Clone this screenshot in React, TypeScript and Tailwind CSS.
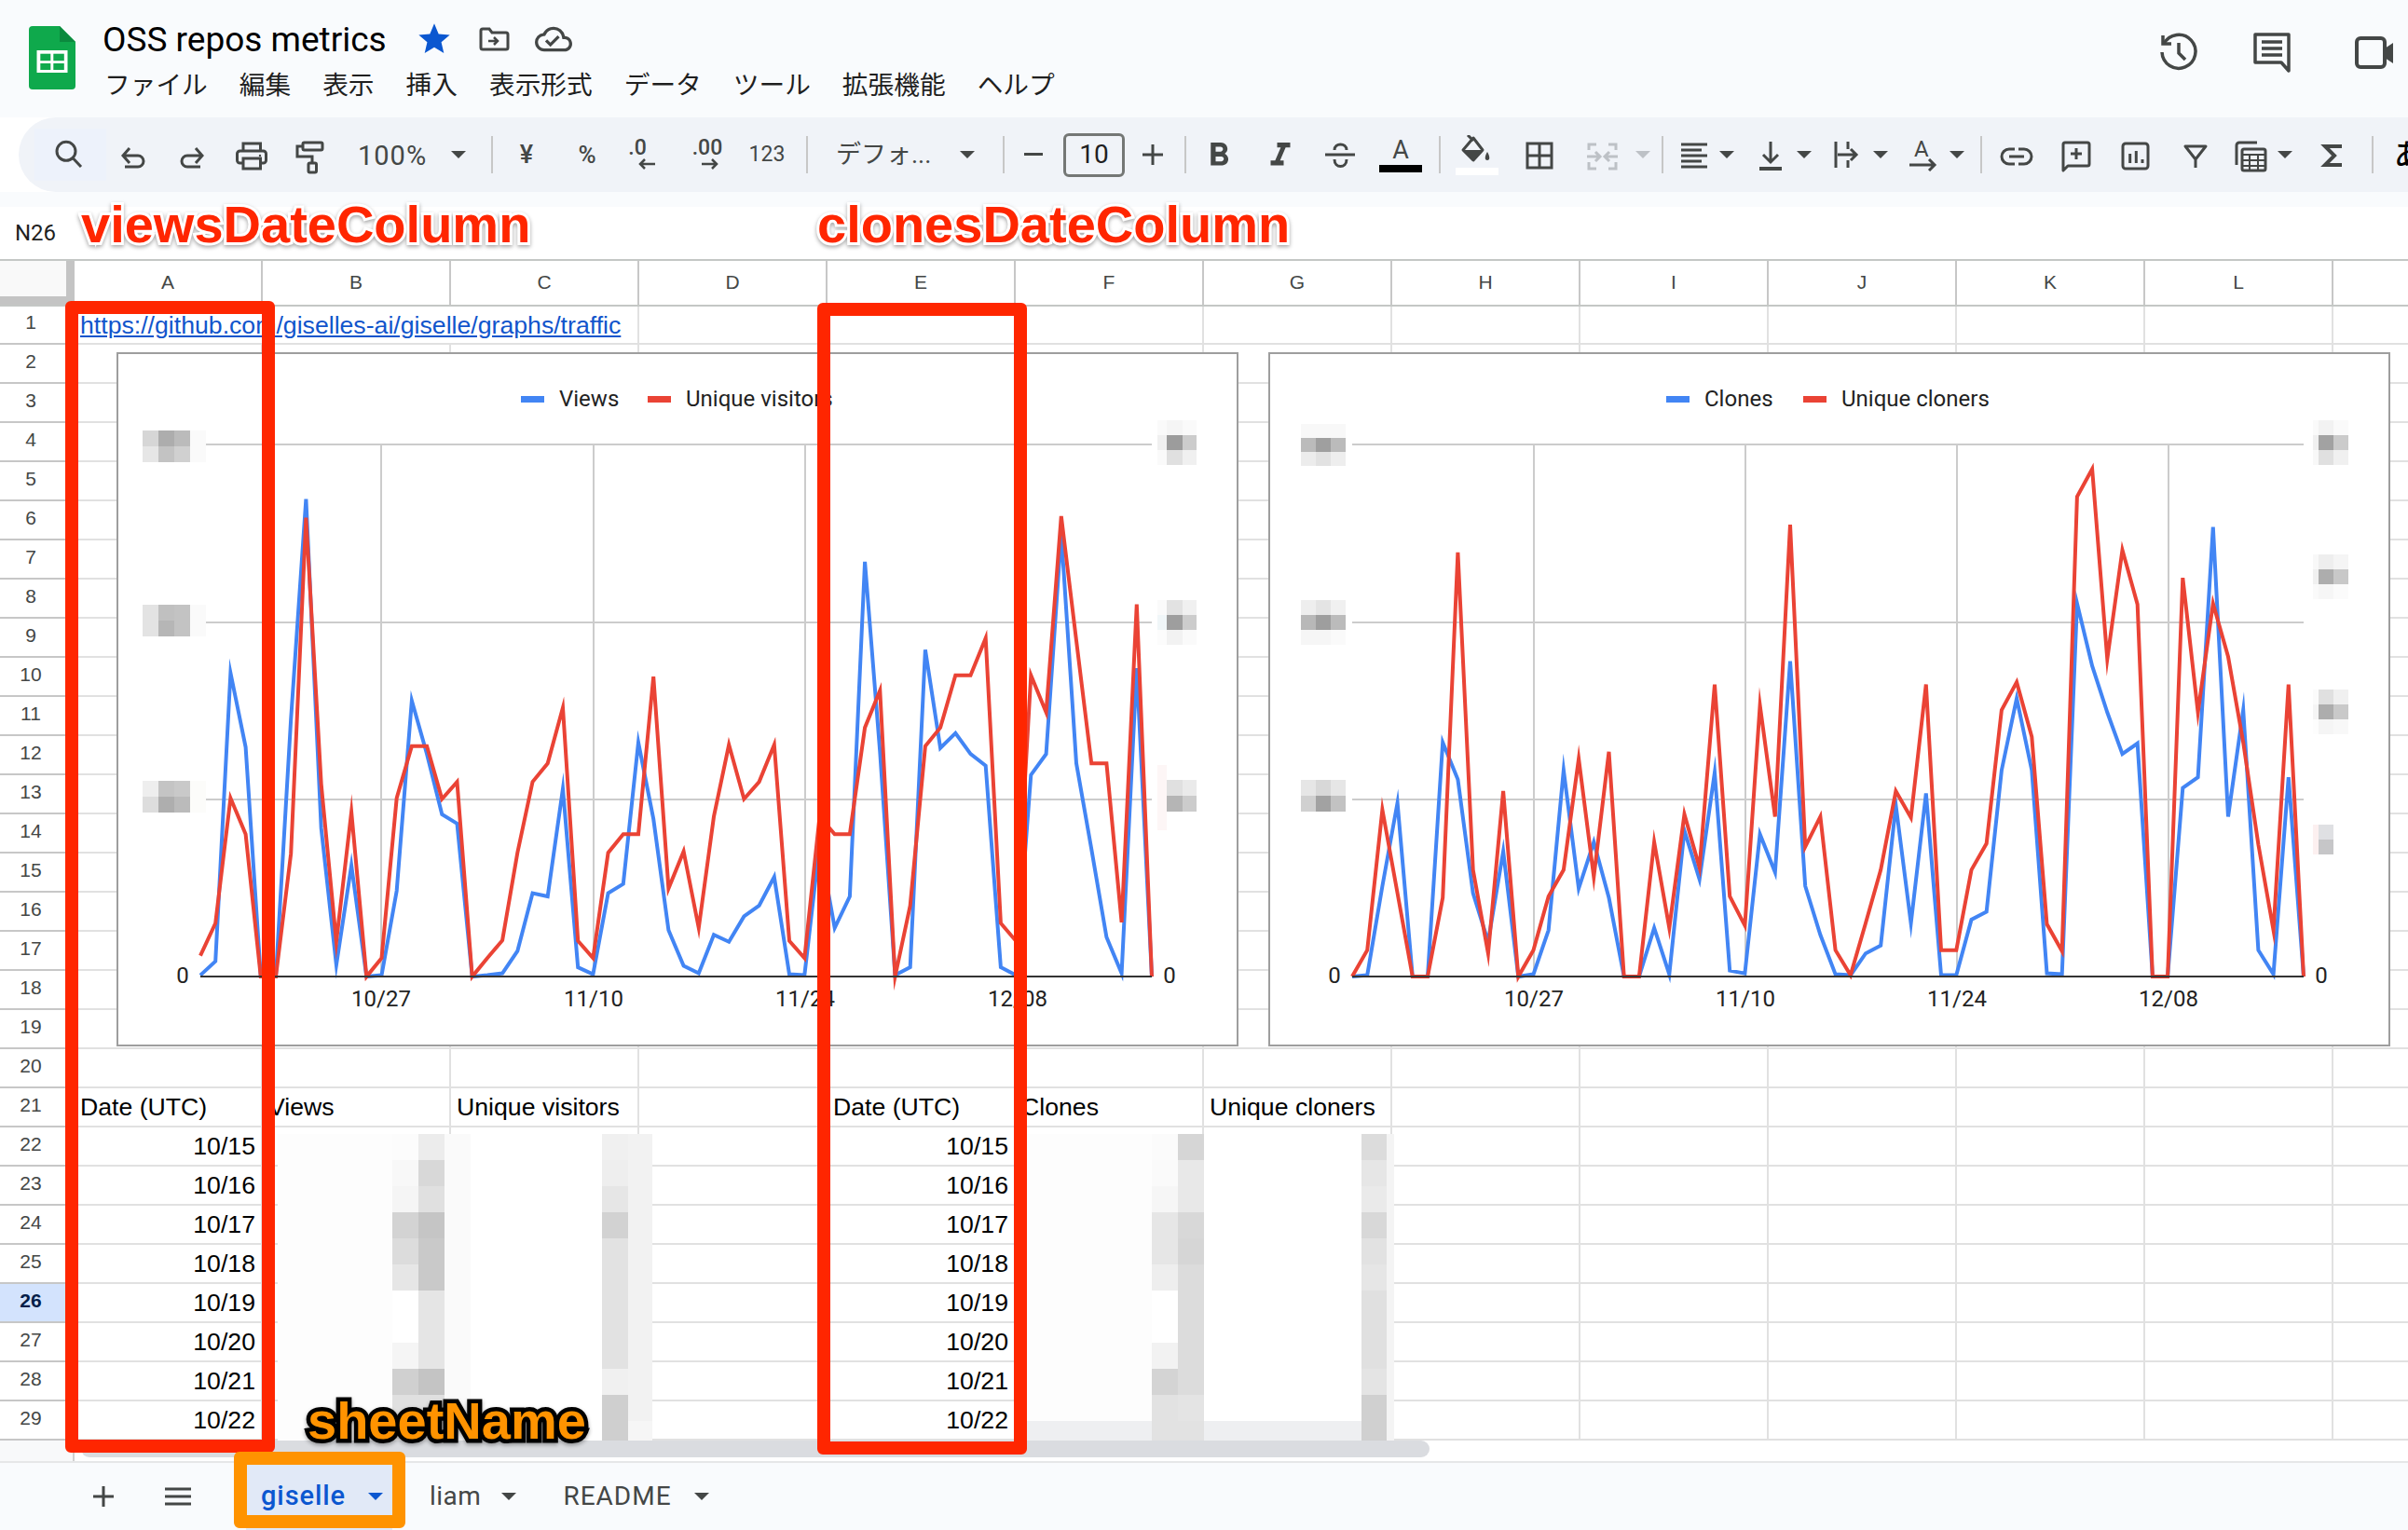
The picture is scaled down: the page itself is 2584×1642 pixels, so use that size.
import React from "react";
import { MdFormatBold, MdFormatItalic, MdOutlineCloudDone, MdStar } from "react-icons/md";

const ICON = "#444746";
const COLS = "ABCDEFGHIJKLM".split("");

const Icon = ({ children }: { children: React.ReactNode }) => (
  <svg width="48" height="48" viewBox="0 0 48 48" fill="none" stroke={ICON} strokeWidth="3">
    {children}
  </svg>
);

const Tb = ({ className, children }: { className: string; children: React.ReactNode }) => (
  <div className={`flex h-[48px] flex-none items-center justify-center ${className}`}>{children}</div>
);

const Drop = ({ className = "", color = ICON }: { className?: string; color?: string }) => (
  <svg className={`flex-none ${className}`} width="16" height="8" viewBox="0 0 16 8" fill={color}>
    <path d="M0 0H16L8 8Z" />
  </svg>
);

const Divider = () => <div className="h-[40px] w-[2px] flex-none bg-[#c7c7c7]" />;

const blue1 = [1382, 1352, 730, 890, 1385, 1385, 830, 355, 1065, 1360, 1145, 1385, 1382, 1200, 790, 905, 1035, 1055, 1385, 1382, 1378, 1330, 1205, 1212, 980, 1365, 1380, 1205, 1185, 880, 1045, 1285, 1362, 1378, 1295, 1310, 1255, 1232, 1170, 1380, 1382, 1100, 1280, 1212, 490, 900, 1382, 1365, 680, 892, 860, 905, 930, 1365, 1382, 950, 905, 430, 925, 1110, 1300, 1378, 720, 1385];
const red1 = [1340, 1270, 1000, 1078, 1385, 1385, 1120, 395, 970, 1310, 1030, 1385, 1345, 1000, 888, 888, 1002, 965, 1385, 1345, 1307, 1118, 965, 925, 805, 1308, 1345, 1118, 1078, 1078, 738, 1195, 1115, 1280, 1040, 885, 1002, 965, 885, 1308, 1345, 1040, 1078, 1078, 848, 768, 1385, 1232, 888, 848, 735, 735, 655, 1270, 1308, 735, 815, 392, 660, 925, 925, 1268, 582, 1385];
const blue2 = [1385, 1382, 1190, 1010, 1385, 1385, 880, 960, 1205, 1310, 1115, 1385, 1380, 1285, 940, 1195, 1095, 1215, 1385, 1385, 1280, 1380, 1070, 1175, 945, 1372, 1378, 1078, 1160, 705, 1190, 1295, 1380, 1382, 1335, 1318, 1015, 1270, 990, 1382, 1382, 1262, 1245, 940, 785, 940, 1378, 1380, 580, 715, 815, 905, 882, 1385, 1385, 978, 955, 415, 1040, 810, 1328, 1380, 955, 1385];
const red2 = [1385, 1328, 1025, 1205, 1385, 1385, 1215, 470, 1155, 1335, 985, 1385, 1328, 1212, 1155, 915, 1170, 900, 1385, 1385, 1095, 1280, 1035, 1150, 755, 1212, 1275, 800, 1040, 410, 1105, 1040, 1328, 1382, 1270, 1155, 985, 1042, 755, 1328, 1328, 1155, 1098, 810, 750, 868, 1272, 1330, 350, 290, 700, 465, 582, 1385, 1385, 525, 815, 580, 695, 880, 1100, 1285, 755, 1385];

// pixelated redactions: [x, y, w, h, colour]
type Tile = [number, number, number, number, string];
const tiles = (x: number, y: number, widths: number[], h: number, rows: string[][]): Tile[] =>
  rows.flatMap((row, r) => {
    let cx = x;
    return row.map((c, i) => {
      const t: Tile = [cx, y + r * h, widths[i], h, c];
      cx += widths[i];
      return t;
    });
  });

const mosaic1: Tile[] = [
  ...tiles(153, 462, [17, 17, 17, 17], 17, [["#d6d6d6", "#adadad", "#bbbbbb", "#fafafa"], ["#e6e6e6", "#c3c3c3", "#d0d0d0", "#fafafa"]]),
  ...tiles(153, 649, [17, 17, 17, 17], 17, [["#e3e3e3", "#c0c0c0", "#c3c3c3", "#fafafa"], ["#e3e3e3", "#b6b6b6", "#c3c3c3", "#fafafa"]]),
  ...tiles(153, 838, [17, 17, 17, 17], 17, [["#eeeeee", "#c4c4c4", "#c9c9c9", "#fcfcfa"], ["#dddddd", "#aeaeae", "#bbbbbb", "#fcfcfa"]]),
  ...tiles(1242, 451, [10, 17, 15], 16, [["#fafafa", "#f5f5f5", "#fafafa"], ["#f0f0f0", "#9c9c9c", "#cccccc"], ["#fafafa", "#e0e0e0", "#f0f0f0"]]),
  ...tiles(1242, 644, [10, 17, 15], 16, [["#fafafa", "#e2e2e2", "#f0f0f0"], ["#f0f6f8", "#9e9e9e", "#cccccc"], ["#fcfcfc", "#f2f2f2", "#fafafa"]]),
  ...tiles(1242, 821, [10], 70, [["#fdf6f6"]]),
  ...tiles(1252, 837, [17, 15], 17, [["#e0e0e0", "#eaeaea"], ["#b5b5b5", "#cccccc"]]),
];

const mosaic2: Tile[] = [
  ...tiles(1396, 455, [16, 16, 16], 15, [["#f8f8f8", "#f8f8f8", "#f8f8f8"], ["#bbbbbb", "#9f9f9f", "#bbbbbb"], ["#ececec", "#e2e2e2", "#eeeeee"]]),
  ...tiles(1396, 644, [16, 16, 16], 16, [["#eeeeee", "#e4e4e4", "#f0f0f0"], ["#b8b8b8", "#9e9e9e", "#bbbbbb"], ["#f6f6f6", "#f6f6f6", "#fafafa"]]),
  ...tiles(1396, 837, [16, 16, 16], 17, [["#e6e6e6", "#d8d8d8", "#e6e6e6"], ["#d0d0d0", "#a2a2a2", "#c2c2c2"]]),
  ...tiles(2482, 451, [6, 16, 16], 16, [["#fafafa", "#f2f2f2", "#fafafa"], ["#f0f0f0", "#a2a2a2", "#cbcbcb"], ["#f8f8f8", "#e0e0e0", "#f0f0f0"]]),
  ...tiles(2482, 595, [6, 16, 16], 16, [["#f8f8f8", "#eeeeee", "#f5f5f5"], ["#f0f0f0", "#adadad", "#c8c8c8"], ["#fafafa", "#f6f6f6", "#fbfbfb"]]),
  ...tiles(2482, 740, [6, 16, 16], 16, [["#fbfbfb", "#e0e0e0", "#f0f0f0"], ["#f5f5f5", "#adadad", "#c9c9c9"], ["#fdfdfd", "#f5f5f5", "#f8f8f8"]]),
  ...tiles(2482, 885, [6, 16], 16, [["#fcf0f0", "#dfe0e3"], ["#fcf0f0", "#c6c6c8"]]),
];

type ChartProps = {
  className: string;
  x: number;
  w: number;
  plotLeft: number;
  plotRight: number;
  blue: number[];
  red: number[];
  ticks: [number, string][];
  legendA: [number, string];
  legendB: [number, string];
  mosaic: Tile[];
  zeros: [number, number];
};

// the values are read off the reference, 2.01 units to a pixel from y=360
const toY = (v: number) => 359 + v / 2.01;

const TrafficChart = ({ className, x, w, plotLeft, plotRight, blue, red, ticks, legendA, legendB, mosaic, zeros }: ChartProps) => {
  const step = (plotRight - plotLeft) / 63;
  const points = (vals: number[]) => vals.map((v, i) => `${(plotLeft + i * step).toFixed(1)},${toY(v).toFixed(1)}`).join(" ");
  return (
    <div className={`absolute top-[378px] h-[745px] border-2 border-[#9e9e9e] bg-white ${className}`}>
      <svg className="block" width={w - 4} height={741} viewBox={`${x + 2} 380 ${w - 4} 741`} fontSize="24" fill="#222222">
        {[477, 668, 858].map((y) => (
          <line key={y} x1={plotLeft} x2={plotRight} y1={y} y2={y} stroke="#cccccc" strokeWidth="2" />
        ))}
        {ticks.map(([tx]) => (
          <line key={tx} x1={tx} x2={tx} y1={477} y2={1048} stroke="#cccccc" strokeWidth="2" />
        ))}
        <polyline points={points(blue)} fill="none" stroke="#4285f4" strokeWidth="4" strokeMiterlimit="10" />
        <polyline points={points(red)} fill="none" stroke="#ea4335" strokeWidth="4" strokeMiterlimit="10" />
        <line x1={plotLeft} x2={plotRight} y1={1048} y2={1048} stroke="#333333" strokeWidth="2" />
        <rect x={legendA[0]} y={425} width="25" height="7" fill="#4285f4" />
        <text x={legendA[0] + 41} y={436}>{legendA[1]}</text>
        <rect x={legendB[0]} y={425} width="25" height="7" fill="#ea4335" />
        <text x={legendB[0] + 41} y={436}>{legendB[1]}</text>
        {ticks.map(([tx, label]) => (
          <text key={label} x={tx} y={1080} textAnchor="middle">{label}</text>
        ))}
        <text x={zeros[0]} y={1055} textAnchor="middle">0</text>
        <text x={zeros[1]} y={1055} textAnchor="middle">0</text>
        {mosaic.map(([mx, my, mw, mh, c], i) => (
          <rect key={i} x={mx} y={my} width={mw} height={mh} fill={c} />
        ))}
      </svg>
    </div>
  );
};

const viewCols: { w: number; cells: string[] }[] = [
  { w: 123, cells: Array(12).fill("#fdfdfd") },
  { w: 28, cells: ["#fcfcfc", "#f8f8f8", "#f5f5f5", "#d3d3d3", "#dcdcdc", "#e6e6e6", "#ffffff", "#ffffff", "#f5f5f5", "#d0d0d0", "#e0e0e0", "#ececec"] },
  { w: 28, cells: ["#ececec", "#d8d8d8", "#e0e0e0", "#c5c5c5", "#c9c9c9", "#c9c9c9", "#e5e5e5", "#e5e5e5", "#e5e5e5", "#c4c4c4", "#e0e0e0", "#e6e6e6"] },
  { w: 28, cells: Array(12).fill("#fafafa") },
  { w: 141, cells: Array(12).fill("#ffffff") },
  { w: 28, cells: ["#f0f0f0", "#eeeeee", "#e6e6e6", "#d2d2d2", "#e2e2e2", "#e2e2e2", "#e2e2e2", "#e2e2e2", "#e2e2e2", "#f0f0f0", "#cfcfcf", "#cfcfcf"] },
  { w: 26, cells: [...Array(11).fill("#f2f2f2"), "#f6f6f6"] },
];

const cloneCols: { w: number; cells: string[] }[] = [
  { w: 134, cells: [...Array(11).fill("#fdfdfd"), "#eeeff1"] },
  { w: 28, cells: ["#fbfbfb", "#fafafa", "#f6f6f6", "#e6e6e6", "#e6e6e6", "#eeeeee", "#ffffff", "#ffffff", "#f2f2f2", "#d4d4d4", "#e2e2e2", "#e2e2e2"] },
  { w: 28, cells: ["#d6d6d6", "#e8e8e8", "#e8e8e8", "#d8d8d8", "#d6d6d6", "#dcdcdc", "#dcdcdc", "#dcdcdc", "#dcdcdc", "#dcdcdc", "#e4e4e4", "#e2e2e2"] },
  { w: 169, cells: [...Array(11).fill("#ffffff"), "#eeeff1"] },
  { w: 27, cells: ["#dcdcdc", "#e6e6e6", "#eaeaea", "#d8d8d8", "#e2e2e2", "#e6e6e6", "#e0e0e0", "#e0e0e0", "#e0e0e0", "#e4e4e4", "#d0d0d0", "#d0d0d0"] },
  { w: 8, cells: Array(12).fill("#f4f4f4") },
];

const Mosaic = ({ className, cols }: { className: string; cols: { w: number; cells: string[] }[] }) => (
  <div className={`absolute flex ${className}`}>
    {cols.map((col, i) => (
      <div key={i} style={{ width: col.w }}>
        {col.cells.map((c, j) => (
          <div key={j} className={j === 11 ? "h-[21px]" : "h-[28px]"} style={{ background: c }} />
        ))}
      </div>
    ))}
  </div>
);

const DATES = ["10/15", "10/16", "10/17", "10/18", "10/19", "10/20", "10/21", "10/22"];

const cellText = (row: number, col: number): React.ReactNode => {
  if (row === 1 && col === 0)
    return (
      <a className="whitespace-nowrap pl-[6px] text-[#1155cc] underline" href="#traffic">
        https://github.com/giselles-ai/giselle/graphs/traffic
      </a>
    );
  if (row === 21) {
    const heads: Record<number, string> = { 0: "Date (UTC)", 1: "Views", 2: "Unique visitors", 4: "Date (UTC)", 5: "Clones", 6: "Unique cloners" };
    if (heads[col]) return <span className="whitespace-nowrap pl-[6px]">{heads[col]}</span>;
  }
  if (row >= 22 && (col === 0 || col === 4))
    return <span className="ml-auto pr-[6px]">{DATES[row - 22]}</span>;
  return null;
};

const SheetGrid = () => (
  <div className="h-[1217px] overflow-hidden">
    <div className="grid w-[2706px] grid-cols-[80px_repeat(13,202px)] [font-family:'Liberation_Sans',Arial,sans-serif] text-[26.67px] text-black">
      {Array.from({ length: 29 }, (_, r) => r + 1).map((row) => (
        <React.Fragment key={row}>
          <div
            className={`flex items-center border-r-2 border-b-2 border-[#c7c7c7] pb-[5px] pl-[3px] text-[21px] ${row === 1 ? "h-[41px]" : "h-[42px]"} ${row === 26 ? "bg-[#d3e3fd] font-bold text-[#041e49]" : "text-[#444746]"}`}
          >
            <span className="w-[60px] text-center">{row}</span>
          </div>
          {COLS.map((_, c) => (
            <div
              key={c}
              className={`flex items-center border-b-2 border-[#e1e1e1] ${row === 1 ? "h-[41px]" : "h-[42px]"} ${row === 1 && c < 2 ? "" : "border-r-2"}`}
            >
              {cellText(row, c)}
            </div>
          ))}
        </React.Fragment>
      ))}
    </div>
  </div>
);

export default function App() {
  return (
    <div className="relative h-[1642px] w-[2584px] overflow-hidden bg-white [font-family:Roboto,'Noto_Sans_CJK_JP',sans-serif]">
      {/* title bar */}
      <header className="flex h-[126px] bg-[#f9fbfd] pt-[22px] pl-[31px]">
        <svg className="mt-[6px] flex-none" width="50" height="68" viewBox="0 0 50 68">
          <path d="M4 0H33L50 17V64a4 4 0 0 1-4 4H4a4 4 0 0 1-4-4V4a4 4 0 0 1 4-4Z" fill="#0fa94c" />
          <path d="M33 0L50 17H33Z" fill="#0b8a3e" />
          <rect x="8.5" y="26" width="33" height="24" fill="#ffffff" />
          <rect x="12.3" y="29.7" width="11" height="7.5" fill="#0fa94c" />
          <rect x="26.3" y="29.7" width="11.5" height="7.5" fill="#0fa94c" />
          <rect x="12.3" y="40" width="11" height="7" fill="#0fa94c" />
          <rect x="26.3" y="40" width="11.5" height="7" fill="#0fa94c" />
        </svg>
        <div className="ml-[29px]">
          <div className="flex h-[40px] items-center">
            <span className="w-[301px] whitespace-nowrap text-[37px] leading-none text-black">OSS repos metrics</span>
            <MdStar className="ml-[35px]" size={40} color="#0b57d0" />
            <svg className="ml-[28px]" width="33" height="26" viewBox="0 0 33 26" fill="none" stroke={ICON} strokeWidth="3">
              <path d="M2 4a2 2 0 0 1 2-2H11L14 6H29a2 2 0 0 1 2 2V22a2 2 0 0 1-2 2H4a2 2 0 0 1-2-2Z" />
              <path d="M10 15H20M16 11L20 15L16 19" strokeWidth="2.5" />
            </svg>
            <MdOutlineCloudDone className="ml-[27px]" size={40} color={ICON} />
          </div>
          <nav className="mt-[10px] ml-[2px] flex h-[40px] items-center gap-[34px] text-[27.7px] whitespace-nowrap text-[#1f1f1f]">
            {["ファイル", "編集", "表示", "挿入", "表示形式", "データ", "ツール", "拡張機能", "ヘルプ"].map((m) => (
              <span key={m}>{m}</span>
            ))}
          </nav>
        </div>
        <div className="mt-[10px] ml-auto flex h-[48px] flex-none items-center">
          <svg width="48" height="48" viewBox="0 0 48 48" fill="none" stroke={ICON} strokeWidth="3.5">
            <path d="M8 15A18 18 0 1 1 6 24" />
            <path d="M7 6V15H16M24 14V25L31 32" />
          </svg>
          <svg className="ml-[52px]" width="48" height="48" viewBox="0 0 48 48" fill="none" stroke={ICON} strokeWidth="3.5">
            <path d="M6 5H42V44L34 35H6Z" strokeLinejoin="round" />
            <path d="M13 13H35M13 20H35M13 27H35" />
          </svg>
          <svg className="ml-[65px]" width="41" height="48" viewBox="0 0 41 48" fill="none" stroke={ICON} strokeWidth="4">
            <rect x="2" y="9" width="30" height="31" rx="4" />
            <path d="M32 20L41 14V36L32 30Z" fill={ICON} stroke="none" />
          </svg>
          <div className="w-[16px]" />
        </div>
      </header>

      {/* toolbar */}
      <div className="ml-[20px] flex h-[80px] items-center overflow-hidden rounded-l-[40px] bg-[#f0f3f8] pl-[17px] text-[#444746]">
        <Tb className="h-[56px] w-[77px] bg-[#edf2fb]">
          <Icon>
            <circle cx="19" cy="20.3" r="10" />
            <path d="M26.5 28L35 37" />
          </Icon>
        </Tb>
        <Tb className="w-[58px]">
          <Icon>
            <path d="M20 17L13 25L20 33M13 25H29a6 6 0 0 1 0 12H15" />
          </Icon>
        </Tb>
        <Tb className="w-[68px]">
          <Icon>
            <path d="M28 17L35 25L28 33M35 25H19a6 6 0 0 0 0 12H33" />
          </Icon>
        </Tb>
        <Tb className="w-[59px]">
          <Icon>
            <rect x="8.5" y="20" width="31" height="13" rx="3" />
            <path d="M15 20V12H33.5V20" />
            <rect x="15" y="28" width="18.5" height="11" fill="#f0f3f8" />
            <circle cx="33" cy="25" r="1.2" fill={ICON} stroke="none" />
          </Icon>
        </Tb>
        <Tb className="w-[66px]">
          <Icon>
            <rect x="17" y="11" width="21" height="8" rx="1.5" />
            <path d="M17 15H11V26H27V33" />
            <rect x="23" y="33" width="8.5" height="10" rx="1.5" />
          </Icon>
        </Tb>
        <Tb className="w-[162px] !justify-start pl-[19px]">
          <span className="mt-[3px] w-[100px] text-[29px] tracking-[1px]">100%</span>
          <Drop />
        </Tb>
        <Divider />
        <Tb className="w-[72px] text-[27px] font-medium">¥</Tb>
        <Tb className="w-[58px] text-[26px] font-medium">%</Tb>
        <Tb className="w-[62px]">
          <div className="flex flex-col items-center text-[23px] leading-[20px] font-medium">
            <span className="-ml-[12px]">.0</span>
            <svg className="ml-[8px]" width="20" height="14" viewBox="0 0 20 14" fill="none" stroke={ICON} strokeWidth="2.5">
              <path d="M19 7H3M8 2L3 7L8 12" />
            </svg>
          </div>
        </Tb>
        <Tb className="w-[76px]">
          <div className="flex flex-col items-center text-[23px] leading-[20px] font-medium">
            .00
            <svg className="ml-[6px]" width="20" height="14" viewBox="0 0 20 14" fill="none" stroke={ICON} strokeWidth="2.5">
              <path d="M1 7H17M12 2L17 7L12 12" />
            </svg>
          </div>
        </Tb>
        <Tb className="w-[52px] text-[23px]">123</Tb>
        <div className="w-[16px] flex-none" />
        <Divider />
        <Tb className="w-[209px] !justify-start pl-[30px] text-[27px]">
          <span className="w-[133px] whitespace-nowrap">デフォ...</span>
          <Drop />
        </Tb>
        <Divider />
        <Tb className="w-[62px]">
          <svg width="20" height="4" viewBox="0 0 20 4" fill={ICON}><rect width="20" height="3" /></svg>
        </Tb>
        <div className="ml-[1px] flex h-[47px] w-[66px] flex-none items-center justify-center rounded-[6px] border-[3px] border-[#747775] text-[28px] text-[#1f1f1f]">10</div>
        <Tb className="w-[60px]">
          <svg width="22" height="22" viewBox="0 0 22 22" stroke={ICON} strokeWidth="3"><path d="M0 11H22M11 0V22" /></svg>
        </Tb>
        <div className="w-[4px] flex-none" />
        <Divider />
        <Tb className="w-[70px]"><MdFormatBold className="mt-[2px]" size={42} color={ICON} /></Tb>
        <Tb className="w-[62px]"><MdFormatItalic className="mt-[2px]" size={42} color={ICON} /></Tb>
        <Tb className="w-[65px]">
          <Icon>
            <path d="M8 24H40" />
            <path d="M18 19C18 11 31 11 31 19M18 29C18 39 31 39 31 29" />
          </Icon>
        </Tb>
        <Tb className="w-[66px]">
          <div className="mt-[2px] flex w-[46px] flex-col items-center">
            <span className="text-[27px] leading-[25px]">A</span>
            <div className="mt-[3px] h-[8px] w-[46px] bg-black" />
          </div>
        </Tb>
        <div className="w-[8px] flex-none" />
        <Divider />
        <Tb className="w-[78px]">
          <div className="flex w-[46px] flex-col items-center">
            <svg width="48" height="32" viewBox="0 0 48 32" fill="none" stroke={ICON} strokeWidth="3">
              <path d="M14 0L20 6" />
              <path d="M20 3L30 16L20 27L9 16Z" strokeLinejoin="round" />
              <path d="M9 16H31L20 27Z" fill={ICON} stroke="none" />
              <path d="M35 18C32 23 32 27 35 27C38 27 38 23 35 18Z" fill={ICON} stroke="none" />
            </svg>
            <div className="mt-[3px] h-[8px] w-[46px] bg-white" />
          </div>
        </Tb>
        <Tb className="w-[56px]">
          <Icon>
            <rect x="11" y="12" width="26" height="26" />
            <path d="M24 12V38M11 25H37" />
          </Icon>
        </Tb>
        <Tb className="w-[78px]">
          <svg width="48" height="48" viewBox="0 0 48 48" fill="none" stroke="#bdc1c6" strokeWidth="3">
            <path d="M18 13H10V19M10 32V39H18M31 13H39V19M39 32V39H31" />
            <path d="M8 26H21M17 21L22 26L17 31M41 26H28M32 21L27 26L32 31" />
          </svg>
        </Tb>
        <Drop className="-ml-[3px] mr-[-3px]" color="#bdc1c6" />
        <div className="w-[15px] flex-none" />
        <Divider />
        <Tb className="w-[66px]">
          <Icon>
            <path d="M10 13H38M10 19H32M10 25H38M10 31H32M10 37H38" />
          </Icon>
        </Tb>
        <Drop className="-ml-[6px]" />
        <Tb className="w-[77px]">
          <Icon>
            <path d="M24 10V32M16 24L24 32L32 24" />
            <path d="M12 39H36" strokeWidth="4" />
          </Icon>
        </Tb>
        <Drop className="-ml-[10px]" />
        <Tb className="w-[74px]">
          <Icon>
            <path d="M13 10V38M26 10V18M26 30V38M15 24H35M29 18L35 24L29 30" />
          </Icon>
        </Tb>
        <Drop className="-ml-[8px]" />
        <Tb className="w-[76px]">
          <div className="relative h-[36px] w-[30px]">
            <span className="absolute top-[0px] left-[5px] text-[24px] leading-[24px]">A</span>
            <svg className="absolute bottom-[0px] left-[0px]" width="30" height="14" viewBox="0 0 30 14" fill="none" stroke={ICON} strokeWidth="3">
              <path d="M0 7H27M21 1L27 7L21 13" />
            </svg>
          </div>
        </Tb>
        <Drop className="-ml-[10px]" />
        <div className="w-[17px] flex-none" />
        <Divider />
        <Tb className="w-[74px]">
          <Icon>
            <path d="M22 18H16a8 8 0 0 0 0 16H22M26 18H32a8 8 0 0 1 0 16H26M16 26H32" />
          </Icon>
        </Tb>
        <Tb className="w-[54px]">
          <Icon>
            <path d="M10 13a2 2 0 0 1 2-2H36a2 2 0 0 1 2 2V34a2 2 0 0 1-2 2H15L10 41Z" strokeLinejoin="round" />
            <path d="M24 17V29M18 23H30" />
          </Icon>
        </Tb>
        <Tb className="w-[74px]">
          <Icon>
            <rect x="10" y="12" width="27" height="27" rx="3" />
            <path d="M17.7 23V33M24.3 20V33M31 29V33" />
          </Icon>
        </Tb>
        <Tb className="w-[54px]">
          <Icon>
            <path d="M13 15H35L24 29ZM24 29V38" strokeLinejoin="round" />
          </Icon>
        </Tb>
        <Tb className="w-[65px]">
          <Icon>
            <path d="M30 11H11a3 3 0 0 0-3 3V35" />
            <rect x="14" y="18" width="25" height="23" rx="2" />
            <path d="M14 24H39M14 30H39M14 36H39M22 24V41M31 24V41" strokeWidth="2" />
          </Icon>
        </Tb>
        <Drop className="-ml-[4px]" />
        <Tb className="w-[85px]">
          <svg width="48" height="48" viewBox="0 0 48 48" fill="none" stroke={ICON} strokeWidth="4">
            <path d="M34 15H16L26 25L16 35H34" />
          </svg>
        </Tb>
        <Divider />
        <span className="ml-[22px] flex-none text-[32px] font-medium text-black">あ</span>
      </div>

      {/* name box */}
      <div className="flex h-[72px] items-end bg-[#f9fbfd] pt-[16px]">
        <div className="flex h-[56px] w-full items-center bg-white pl-[16px] text-[24px] text-[#1f1f1f]">N26</div>
      </div>

      {/* column headers */}
      <div className="grid w-[2706px] grid-cols-[80px_repeat(13,202px)] border-y-2 border-[#c4c7c5] text-[21px] text-[#444746] [font-family:'Liberation_Sans',Arial,sans-serif]">
        <div className="h-[47px] border-r-[9px] border-b-[9px] border-[#c4c4c4] bg-[#f9f9f9]" />
        {COLS.map((c) => (
          <div key={c} className="flex h-[47px] items-center justify-center border-r-2 border-[#c7c7c7] pb-[2px]">{c === "M" ? "" : c}</div>
        ))}
      </div>

      <SheetGrid />

      {/* horizontal scrollbar */}
      <div className="flex h-[22px] bg-white">
        <div className="h-full w-[80px] flex-none border-r-2 border-[#d0d0d0] bg-[#f8f9fa]" />
        <div className="ml-[7px] h-[18px] w-[1447px] rounded-full bg-[#dadce0]" />
      </div>

      {/* sheet tabs */}
      <div className="flex h-[74px] items-start border-t-2 border-[#e6e7e8] bg-[#f9fbfd] text-[28px] text-[#444746]">
        <div className="flex h-[72px] w-[264px] flex-none items-center pl-[100px]">
          <svg width="22" height="22" viewBox="0 0 22 22" stroke={ICON} strokeWidth="3"><path d="M0 11H22M11 0V22" /></svg>
          <svg className="ml-[55px]" width="28" height="20" viewBox="0 0 28 20" stroke={ICON} strokeWidth="3"><path d="M0 2H28M0 10H28M0 18H28" /></svg>
        </div>
        <div className="flex h-[72px] w-[157px] flex-none items-center bg-[#e1e9f7] pl-[16px] text-[29px] font-medium tracking-[0.9px] text-[#0b57d0]">
          giselle
          <Drop className="ml-[24px]" color="#0b57d0" />
        </div>
        <div className="flex h-[72px] flex-none items-center pl-[40px] tracking-[0.5px]">
          liam
          <Drop className="ml-[22px]" />
        </div>
        <div className="flex h-[72px] flex-none items-center pl-[50px] tracking-[1px]">
          README
          <Drop className="ml-[24px]" />
        </div>
      </div>

      {/* charts and redacted values sit over the grid */}
      <TrafficChart
        className="left-[125px] w-[1204px]"
        x={125}
        w={1204}
        plotLeft={215}
        plotRight={1236}
        blue={blue1}
        red={red1}
        ticks={[[409, "10/27"], [637, "11/10"], [864, "11/24"], [1092, "12/08"]]}
        legendA={[559, "Views"]}
        legendB={[695, "Unique visitors"]}
        mosaic={mosaic1}
        zeros={[196, 1255]}
      />
      <TrafficChart
        className="left-[1361px] w-[1204px]"
        x={1361}
        w={1204}
        plotLeft={1451}
        plotRight={2472}
        blue={blue2}
        red={red2}
        ticks={[[1646, "10/27"], [1873, "11/10"], [2100, "11/24"], [2327, "12/08"]]}
        legendA={[1788, "Clones"]}
        legendB={[1935, "Unique cloners"]}
        mosaic={mosaic2}
        zeros={[1432, 2491]}
      />
      <Mosaic className="top-[1217px] left-[298px]" cols={viewCols} />
      <Mosaic className="top-[1217px] left-[1102px]" cols={cloneCols} />

      {/* annotations */}
      <div className="absolute top-[323px] left-[70px] h-[1236px] w-[225px] rounded-[6px] border-[14px] border-[#ff2600]" />
      <div className="absolute top-[325px] left-[877px] h-[1236px] w-[225px] rounded-[6px] border-[14px] border-[#ff2600]" />
      <div className="absolute top-[1558px] left-[251px] h-[82px] w-[184px] rounded-[6px] border-[14px] border-[#ff9300]" />
      <span className="absolute top-[213px] left-[87px] text-[56px] leading-none font-bold text-[#ff2600] [font-family:'Liberation_Sans',Arial,sans-serif] [paint-order:stroke_fill] [-webkit-text-stroke:6px_white] [filter:drop-shadow(0_2px_2px_rgba(0,0,0,0.35))]">
        viewsDateColumn
      </span>
      <span className="absolute top-[213px] left-[877px] text-[56px] leading-none font-bold text-[#ff2600] [font-family:'Liberation_Sans',Arial,sans-serif] [paint-order:stroke_fill] [-webkit-text-stroke:6px_white] [filter:drop-shadow(0_2px_2px_rgba(0,0,0,0.35))]">
        clonesDateColumn
      </span>
      <span className="absolute top-[1497px] left-[330px] text-[56px] leading-none font-bold text-[#ff9300] [font-family:'Liberation_Sans',Arial,sans-serif] [paint-order:stroke_fill] [-webkit-text-stroke:9px_black] [filter:drop-shadow(0_2px_2px_rgba(0,0,0,0.35))]">
        sheetName
      </span>
    </div>
  );
}
